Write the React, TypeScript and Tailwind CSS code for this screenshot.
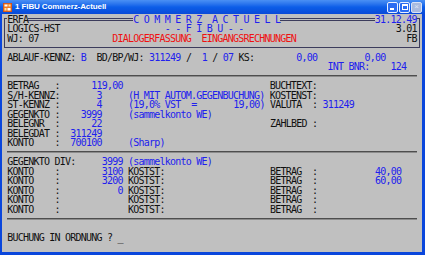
import React from "react";

type Item = [number, string, string];

const BL = "text-[#2020ee]";
const RD = "text-[#f01010]";
const BK = "text-[#101010]";

function Line({ items, start = 0 }: { items: Item[]; start?: number }) {
  let cur = start;
  const out: React.ReactNode[] = [];
  items.forEach(([col, text, cls], i) => {
    if (col > cur) out.push(<span key={"s" + i}>{" ".repeat(col - cur)}</span>);
    out.push(
      <span key={"t" + i} className={cls}>
        {text}
      </span>
    );
    cur = col + text.length;
  });
  return <div className="flex h-[9.5px] items-center whitespace-pre">{out}</div>;
}

function Sep() {
  return (
    <div className="flex h-[9.5px] items-center pl-[5.25px]">
      <div className="h-[2px] w-[409.5px] border-t border-b border-t-[#4e4e4e] border-b-[#8c8c8c]" />
    </div>
  );
}

function VCell() {
  return (
    <div className="flex h-[9.5px] w-[5.25px] pl-[2.1px]">
      <div className="h-full w-px bg-[#3c3c5c]" />
    </div>
  );
}

function Blank() {
  return <div className="h-[9.5px]" />;
}

function Konto({ v, b }: { v: string; b: string }) {
  const items: Item[] = [
    [1, "KONTO", BK],
    [10, ":", BK],
    [23 - v.length, v, BL],
    [24, "KOSTST:", BK],
    [51, "BETRAG", BK],
    [59, ":", BK],
  ];
  if (b) items.push([71, b, BL]);
  return <Line items={items} />;
}

export default function App() {
  return (
    <div className="flex h-[255px] w-[425px] flex-col bg-[#0a46dc] font-['Liberation_Sans',sans-serif]">
      {/* Title bar */}
      <div className="flex h-[14px] shrink-0 items-center bg-linear-to-b from-[#4a90f4] via-[#0c5ee8] to-[#0a4ad8] pl-[3px] pr-[3px]">
        <svg width="9" height="9" viewBox="0 0 9 9" className="mr-[3px] shrink-0">
          <rect x="0" y="0" width="9" height="9" fill="#f07a22" />
          <rect x="0" y="0" width="9" height="9" fill="none" stroke="#c0401a" strokeWidth="1" />
          <rect x="1.5" y="1.5" width="3" height="2" fill="#ffffff" />
          <rect x="5.5" y="1.5" width="2" height="2" fill="#ffe0a0" />
          <rect x="1.5" y="5" width="2" height="2.5" fill="#ffe0a0" />
          <rect x="4.5" y="5" width="3" height="2.5" fill="#ffffff" />
        </svg>
        <span className="text-[8px] font-bold leading-none tracking-[-0.1px] text-white">
          1 FIBU Commerz-Actuell
        </span>
        <div className="ml-auto flex gap-px">
          <div className="flex h-[11px] w-[11px] items-end rounded-[2px] border border-[#e8f0ff] bg-[#2a6cf2] pb-[2px] pl-[2px]">
            <div className="h-[2px] w-[4px] bg-white" />
          </div>
          <div className="flex h-[11px] w-[11px] items-center justify-center rounded-[2px] border border-[#e8f0ff] bg-[#2a6cf2]">
            <div className="h-[6px] w-[6px] border border-t-2 border-white" />
          </div>
          <div className="flex h-[11px] w-[11px] items-center justify-center rounded-[2px] border border-[#d8e2f8] bg-[#a9badf] text-[8px] leading-none text-[#dfe6f6]">
            ×
          </div>
        </div>
      </div>

      {/* Client area */}
      <div className="ml-[2px] mr-[3px] h-[238px] bg-[#c0c0c0] pt-[0.5px] font-['DejaVu_Sans_Mono',monospace] text-[10px] leading-[9.5px] tracking-[-0.77px]">
        {/* Header box */}
        <div className="flex h-[9.5px] items-center whitespace-pre">
          <div className="flex h-[9.5px] w-[5.25px] items-start pl-[2.1px] pt-[3.25px]">
            <div className="h-[6.25px] w-[3.15px] border-l border-t border-[#3c3c5c]" />
          </div>
          <span className={BK}>ERFA</span>
          <div className="h-[3px] w-[105px] border-y border-[#3c3c5c]" />
          <span className={BL}>C O M M E R Z  A C T U E L L</span>
          <div className="h-[3px] w-[94.5px] border-y border-[#3c3c5c]" />
          <span className={BL}>31.12.49</span>
          <div className="flex h-[9.5px] w-[5.25px] items-start pt-[3.25px]">
            <div className="h-[6.25px] w-[3.15px] border-r border-t border-[#3c3c5c]" />
          </div>
        </div>
        <div className="flex">
          <VCell />
          <div className="w-[409.5px]">
            <Line
              start={1}
              items={[
                [1, "LOGICS-HST", BK],
                [31, "- - F I B U - -", BL],
                [75, "3.01", BK],
              ]}
            />
          </div>
          <VCell />
        </div>
        <div className="flex">
          <VCell />
          <div className="w-[409.5px]">
            <Line
              start={1}
              items={[
                [1, "WJ: 07", BK],
                [21, "DIALOGERFASSUNG", RD],
                [38, "EINGANGSRECHNUNGEN", RD],
                [77, "FB", BK],
              ]}
            />
          </div>
          <VCell />
        </div>
        <div className="flex h-[9.5px] items-start">
          <div className="ml-[2.1px] h-[4.75px] w-[3.15px] border-b border-l border-[#3c3c5c]" />
          <div className="mt-[3.75px] h-px w-[409.5px] bg-[#3c3c5c]" />
          <div className="h-[4.75px] w-[3.15px] border-b border-r border-[#3c3c5c]" />
        </div>

        <Line
          items={[
            [1, "ABLAUF-KENNZ:", BK],
            [15, "B", BL],
            [18, "BD/BP/WJ:", BK],
            [28, "311249", BL],
            [35, "/", BK],
            [38, "1", BL],
            [40, "/", BK],
            [42, "07", BL],
            [45, "KS:", BK],
            [56, "0,00", BL],
            [69, "0,00", BL],
          ]}
        />
        <Line
          items={[
            [62, "INT BNR:", BL],
            [74, "124", BL],
          ]}
        />
        <Sep />
        <Line
          items={[
            [1, "BETRAG", BK],
            [10, ":", BK],
            [17, "119,00", BL],
            [51, "BUCHTEXT:", BK],
          ]}
        />
        <Line
          items={[
            [1, "S/H-KENNZ:", BK],
            [18, "3", BL],
            [24, "(H MIT AUTOM.GEGENBUCHUNG)", BL],
            [51, "KOSTENST:", BK],
          ]}
        />
        <Line
          items={[
            [1, "ST-KENNZ", BK],
            [10, ":", BK],
            [18, "4", BL],
            [24, "(19,0% VST", BL],
            [36, "=", BL],
            [44, "19,00)", BL],
            [51, "VALUTA", BK],
            [59, ":", BK],
            [61, "311249", BL],
          ]}
        />
        <Line
          items={[
            [1, "GEGENKTO", BK],
            [10, ":", BK],
            [15, "3999", BL],
            [24, "(sammelkonto WE)", BL],
          ]}
        />
        <Line
          items={[
            [1, "BELEGNR", BK],
            [10, ":", BK],
            [17, "22", BL],
            [51, "ZAHLBED", BK],
            [59, ":", BK],
          ]}
        />
        <Line
          items={[
            [1, "BELEGDAT", BK],
            [10, ":", BK],
            [13, "311249", BL],
          ]}
        />
        <Line
          items={[
            [1, "KONTO", BK],
            [10, ":", BK],
            [13, "700100", BL],
            [24, "(Sharp)", BL],
          ]}
        />
        <Sep />
        <Line
          items={[
            [1, "GEGENKTO DIV:", BK],
            [19, "3999", BL],
            [24, "(sammelkonto WE)", BL],
          ]}
        />
        <Konto v="3100" b="40,00" />
        <Konto v="3200" b="60,00" />
        <Konto v="0" b="" />
        <Konto v="" b="" />
        <Konto v="" b="" />
        <Sep />
        <Blank />
        <Line items={[[1, "BUCHUNG IN ORDNUNG ? _", BK]]} />
      </div>
    </div>
  );
}
